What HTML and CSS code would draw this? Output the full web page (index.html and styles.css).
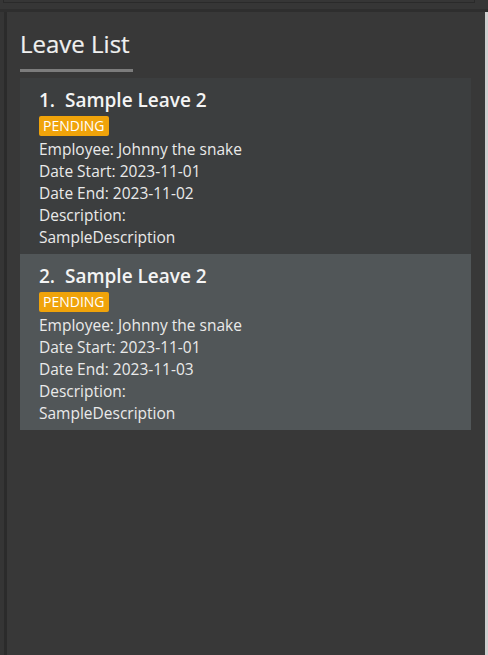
FILE: index.html
```html
<!DOCTYPE html>
<html>
<head>
<meta charset="utf-8">
<link rel="stylesheet" href="styles.css">
</head>
<body>
<div class="window">
  <div class="topbar"><div class="topbox"></div></div>
  <div class="topshade"></div>
  <div class="middle">
    <div class="leftedge"><div class="leftouter"></div><div class="leftinner"></div></div>
    <div class="panel">
      <div class="title-wrap">
        <h1 class="title">Leave List</h1>
      </div>
      <div class="list">
        <div class="card card-even">
          <div class="card-title">1.&nbsp;&nbsp;Sample Leave 2</div>
          <div class="badge-row"><span class="badge">PENDING</span></div>
          <div class="line">Employee: Johnny the snake</div>
          <div class="line">Date Start: 2023-11-01</div>
          <div class="line">Date End: 2023-11-02</div>
          <div class="line">Description:</div>
          <div class="line">SampleDescription</div>
        </div>
        <div class="card card-odd">
          <div class="card-title">2.&nbsp;&nbsp;Sample Leave 2</div>
          <div class="badge-row"><span class="badge">PENDING</span></div>
          <div class="line">Employee: Johnny the snake</div>
          <div class="line">Date Start: 2023-11-01</div>
          <div class="line">Date End: 2023-11-03</div>
          <div class="line">Description:</div>
          <div class="line">SampleDescription</div>
        </div>
      </div>
    </div>
    <div class="scrolltrack"></div>
  </div>
</div>
</body>
</html>
```
FILE: styles.css
```css
html, body {
  margin: 0;
  padding: 0;
  height: 100%;
  background: #383838;
  font-family: "Open Sans", "Noto Sans", sans-serif;
  color: #ffffff;
}
.window {
  height: 655px;
  display: flex;
  flex-direction: column;
}
.topbar {
  height: 9px;
  background: #363636;
  display: flex;
}
.topbox {
  width: 470px;
  height: 2px;
  margin-left: 3px;
  border: 1px solid #2a2a2a;
  border-top: none;
  background: #363636;
}
.topshade {
  height: 3px;
  background: #2e2e2e;
}
.middle {
  flex: 1;
  display: flex;
}
.leftedge {
  display: flex;
  width: 7px;
}
.leftouter {
  width: 4px;
  background: #353535;
}
.leftinner {
  width: 3px;
  background: #2b2b2b;
}
.panel {
  flex: 1;
  padding: 0 14px 0 13px;
  background: #383838;
}
.title-wrap {
  padding-top: 17px;
}
.title {
  display: inline-block;
  margin: 0;
  font-size: 24px;
  font-weight: 400;
  color: #f0f0f0;
  line-height: 30px;
  padding-right: 3px;
  border-bottom: 3px solid #7c7c7c;
  padding-bottom: 10px;
  -webkit-text-stroke: 0.2px #f0f0f0;
}
.list {
  margin-top: 6px;
}
.card {
  padding: 8px 19px 6px 19px;
}
.card-even { background: #3c3e3f; }
.card-odd { background: #515658; }
.card-title {
  font-size: 19px;
  font-weight: 600;
  line-height: 28px;
  color: #f4f4f4;
}
.badge-row {
  height: 24px;
  display: flex;
  align-items: flex-start;
  padding-top: 2px;
  box-sizing: border-box;
}
.badge {
  background: #f0a30a;
  color: #ffffff;
  font-size: 14px;
  line-height: 20px;
  padding: 0 4px;
  border-radius: 2px;
}
.line {
  font-size: 15.5px;
  line-height: 22px;
  color: #eaeaea;
}
.scrolltrack {
  width: 3px;
  background: #cfcfcf;
}
```
